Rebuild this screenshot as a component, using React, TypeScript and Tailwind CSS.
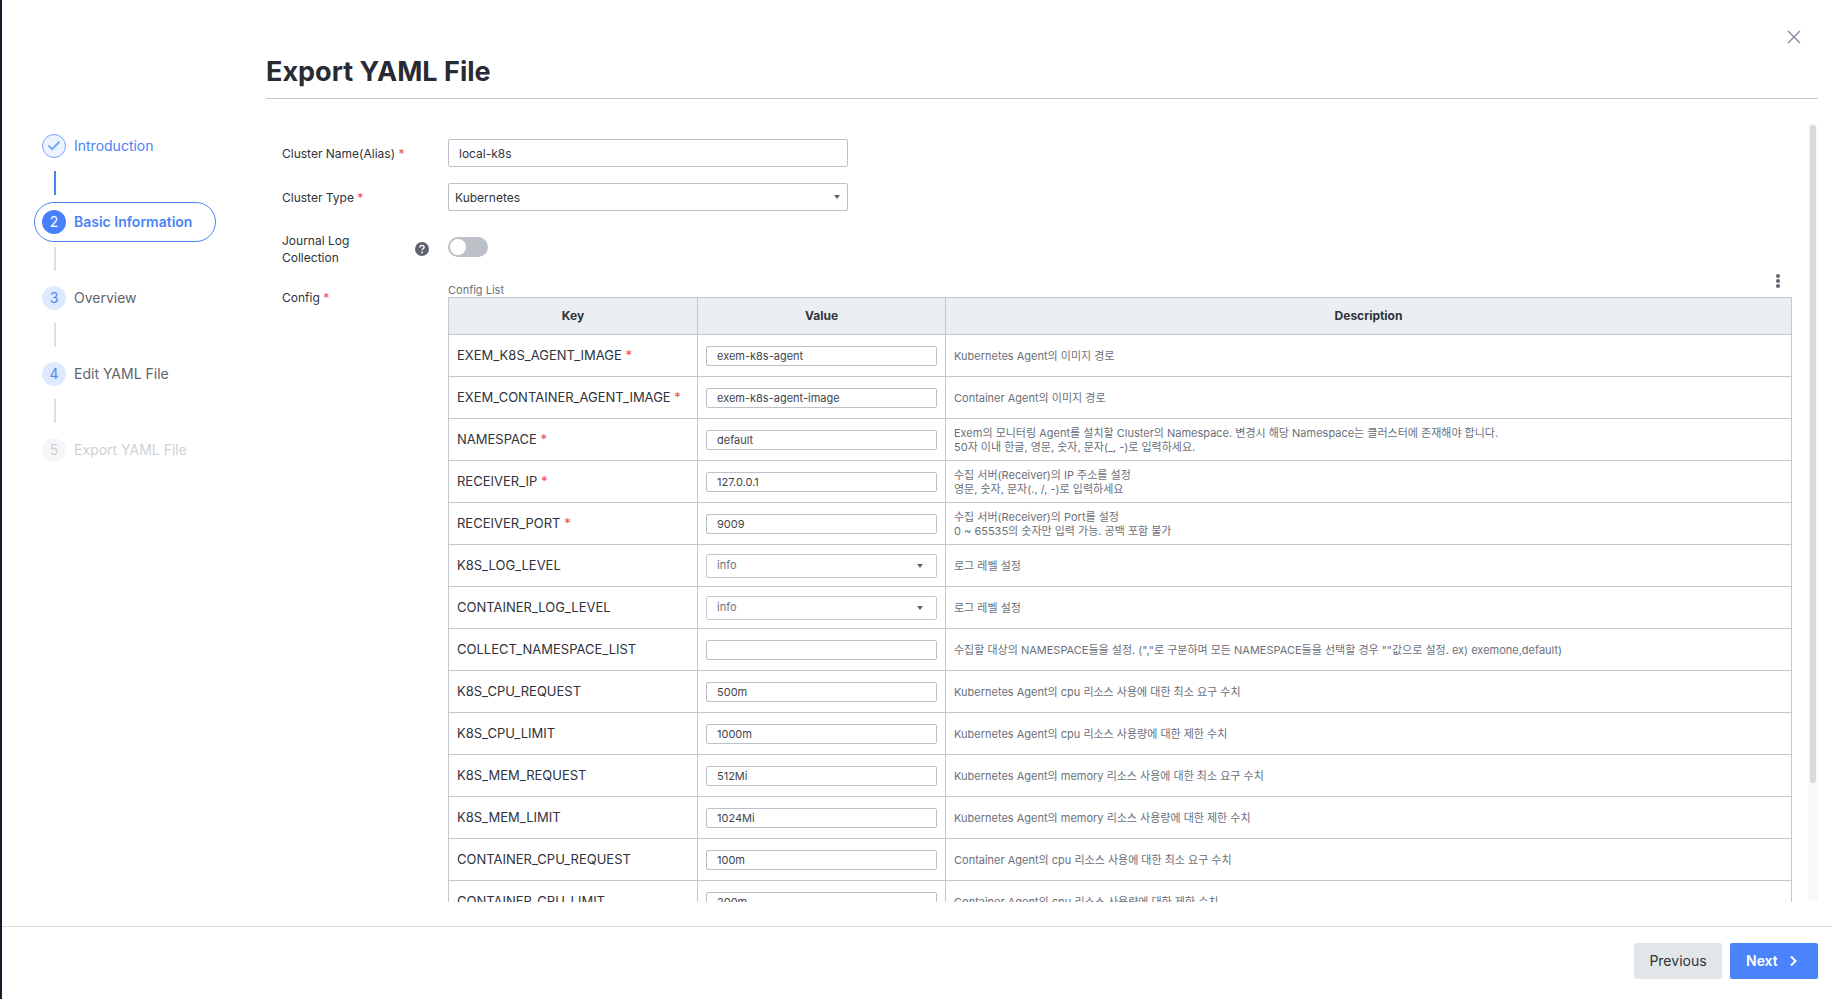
import { useState, type UIEvent } from "react"
import { clsx } from "clsx"

type StepState = "done" | "current" | "todo" | "disabled"

interface Step {
  label: string
  state: StepState
}

interface ConfigItem {
  key: string
  value: string
  description: string
  required?: boolean
  options?: string[]
}

const steps: Step[] = [
  { label: "Introduction", state: "done" },
  { label: "Basic Information", state: "current" },
  { label: "Overview", state: "todo" },
  { label: "Edit YAML File", state: "todo" },
  { label: "Export YAML File", state: "disabled" },
]

const logLevels = ["debug", "info", "warn", "error"]

const configItems: ConfigItem[] = [
  { key: "EXEM_K8S_AGENT_IMAGE", value: "exem-k8s-agent", description: "Kubernetes Agent의 이미지 경로", required: true },
  {
    key: "EXEM_CONTAINER_AGENT_IMAGE",
    value: "exem-k8s-agent-image",
    description: "Container Agent의 이미지 경로",
    required: true,
  },
  {
    key: "NAMESPACE",
    value: "default",
    description:
      "Exem의 모니터링 Agent를 설치할 Cluster의 Namespace. 변경시 해당 Namespace는 클러스터에 존재해야 합니다.\n50자 이내 한글, 영문, 숫자, 문자(_, -)로 입력하세요.",
    required: true,
  },
  {
    key: "RECEIVER_IP",
    value: "127.0.0.1",
    description: "수집 서버(Receiver)의 IP 주소를 설정\n영문, 숫자, 문자(., /, -)로 입력하세요",
    required: true,
  },
  {
    key: "RECEIVER_PORT",
    value: "9009",
    description: "수집 서버(Receiver)의 Port를 설정\n0 ~ 65535의 숫자만 입력 가능. 공백 포함 불가",
    required: true,
  },
  { key: "K8S_LOG_LEVEL", value: "info", description: "로그 레벨 설정", options: logLevels },
  { key: "CONTAINER_LOG_LEVEL", value: "info", description: "로그 레벨 설정", options: logLevels },
  {
    key: "COLLECT_NAMESPACE_LIST",
    value: "",
    description:
      '수집할 대상의 NAMESPACE들을 설정. (","로 구분하며 모든 NAMESPACE들을 선택할 경우 ""값으로 설정. ex) exemone,default)',
  },
  { key: "K8S_CPU_REQUEST", value: "500m", description: "Kubernetes Agent의 cpu 리소스 사용에 대한 최소 요구 수치" },
  { key: "K8S_CPU_LIMIT", value: "1000m", description: "Kubernetes Agent의 cpu 리소스 사용량에 대한 제한 수치" },
  { key: "K8S_MEM_REQUEST", value: "512Mi", description: "Kubernetes Agent의 memory 리소스 사용에 대한 최소 요구 수치" },
  { key: "K8S_MEM_LIMIT", value: "1024Mi", description: "Kubernetes Agent의 memory 리소스 사용량에 대한 제한 수치" },
  { key: "CONTAINER_CPU_REQUEST", value: "100m", description: "Container Agent의 cpu 리소스 사용에 대한 최소 요구 수치" },
  { key: "CONTAINER_CPU_LIMIT", value: "200m", description: "Container Agent의 cpu 리소스 사용량에 대한 제한 수치" },
  { key: "CONTAINER_MEM_REQUEST", value: "128Mi", description: "Container Agent의 memory 리소스 사용에 대한 최소 요구 수치" },
  { key: "CONTAINER_MEM_LIMIT", value: "256Mi", description: "Container Agent의 memory 리소스 사용량에 대한 제한 수치" },
]

function Required() {
  return <span className="text-[#f04a4a]"> *</span>
}

function Caret({ className }: { className?: string }) {
  return (
    <svg viewBox="0 0 6 4" className={clsx("pointer-events-none absolute h-1 w-1.5 text-[#5f636e]", className)}>
      <path d="M0 0h6L3 4z" fill="currentColor" />
    </svg>
  )
}

function StepItem({ step, index }: { step: Step; index: number }) {
  const { label, state } = step
  return (
    <button
      type="button"
      disabled={state === "disabled"}
      className={clsx(
        "flex h-10 w-[182px] items-center gap-2 rounded-full border pl-[7px] text-left text-sm",
        state === "current" ? "border-[#4b83f5]" : "border-transparent",
      )}
    >
      <span
        className={clsx(
          "flex size-6 shrink-0 items-center justify-center rounded-full",
          state === "done" && "border border-[#78a5f8] bg-[#edf3fe] text-[#78a5f8]",
          state === "current" && "bg-[#4880fa] text-white",
          state === "todo" && "bg-[#dde9fe] text-[#5585f5]",
          state === "disabled" && "bg-[#f5f6f7] text-[#cfd1d6]",
        )}
      >
        {state === "done" ? (
          <svg viewBox="0 0 14 12" className="h-3 w-3.5" fill="none" stroke="currentColor" strokeWidth="2">
            <path d="M1.5 5.5 5.2 9.2 12.5 1.8" />
          </svg>
        ) : (
          index + 1
        )}
      </span>
      <span
        className={clsx(
          state === "done" && "text-[#4b83f5]",
          state === "current" && "font-semibold text-[#4b83f5]",
          state === "todo" && "text-[#5f636e]",
          state === "disabled" && "text-[#cfd1d6]",
        )}
      >
        {label}
      </span>
    </button>
  )
}

function Stepper() {
  return (
    <nav className="w-[264px] shrink-0 pt-[126px] pl-8">
      <ol>
        {steps.map((step, index) => (
          <li key={step.label}>
            <StepItem step={step} index={index} />
            {index < steps.length - 1 && (
              <div className="h-9 pt-[5px] pl-5">
                <div className={clsx("h-6 w-0.5", step.state === "done" ? "bg-[#4b83f5]" : "bg-[#dcdfe3]")} />
              </div>
            )}
          </li>
        ))}
      </ol>
    </nav>
  )
}

function ConfigTable() {
  return (
    <table className="w-full table-fixed border-collapse text-[#2f333c]">
      <colgroup>
        <col className="w-[249px]" />
        <col className="w-[248px]" />
        <col />
      </colgroup>
      <thead>
        <tr className="h-[37px] bg-[#ebeff2] text-xs font-semibold">
          <th className="border border-[#c4c7cd]">Key</th>
          <th className="border border-[#c4c7cd]">Value</th>
          <th className="border border-[#c4c7cd]">Description</th>
        </tr>
      </thead>
      <tbody>
        {configItems.map((item) => (
          <tr key={item.key} className="h-[42px]">
            <td className="border border-[#c4c7cd] px-2 text-[13px] whitespace-nowrap">
              <label htmlFor={item.key}>
                {item.key}
                {item.required && <Required />}
              </label>
            </td>
            <td className="border border-[#c4c7cd] px-2">
              {item.options ? (
                <div className="relative">
                  <select
                    id={item.key}
                    defaultValue={item.value}
                    className="block h-6 w-full appearance-none rounded-xs border border-[#c4c7cd] bg-white px-2.5 text-[11px] text-[#6f737d]"
                  >
                    {item.options.map((option) => (
                      <option key={option}>{option}</option>
                    ))}
                  </select>
                  <Caret className="top-2.5 right-3.5" />
                </div>
              ) : (
                <input
                  id={item.key}
                  defaultValue={item.value}
                  className="block h-5 w-full rounded-xs border border-[#bcc0c7] px-2.5 text-[11px] text-[#41454e]"
                />
              )}
            </td>
            <td className="border border-[#c4c7cd] px-2 text-[11px] leading-[14px] whitespace-pre-line text-[#6c707a]">
              {item.description}
            </td>
          </tr>
        ))}
      </tbody>
    </table>
  )
}

export default function App() {
  const [scrolled, setScrolled] = useState(0)

  const handleScroll = (e: UIEvent<HTMLDivElement>) => {
    const el = e.currentTarget
    setScrolled((el.scrollTop / el.scrollHeight) * 100)
  }

  return (
    <div className="flex h-screen flex-col border-l-2 border-[#161a29] bg-white font-['Inter','Noto_Sans_CJK_KR',sans-serif] text-[#2f333c]">
      <div className="flex min-h-0 flex-1">
        <Stepper />

        <main className="flex min-w-0 flex-1 flex-col pr-3.5 pb-6">
          <div className="flex h-[54px] shrink-0 items-end justify-end pr-3 pb-[5px]">
            <button type="button" aria-label="Close" className="size-6 text-[#85899a]">
              <svg viewBox="0 0 24 24" fill="none" stroke="currentColor" strokeWidth="1.4">
                <path d="M6 6l12 12M18 6 6 18" />
              </svg>
            </button>
          </div>
          <h1 className="border-b border-[#c4c7cd] pb-2 text-[27px] leading-9 font-bold text-[#282b33]">
            Export YAML File
          </h1>

          <div className="mt-6 flex min-h-0 flex-1">
            <div
              onScroll={handleScroll}
              className="min-w-0 flex-1 overflow-y-auto p-4 text-xs leading-[17px] [scrollbar-width:none]"
            >
              <div className="flex h-7 items-center">
                <label htmlFor="cluster-name" className="w-[166px]">
                  Cluster Name(Alias)
                  <Required />
                </label>
                <input
                  id="cluster-name"
                  defaultValue="local-k8s"
                  className="h-7 w-[400px] rounded-xs border border-[#bcc0c7] px-2.5"
                />
              </div>

              <div className="mt-4 flex h-7 items-center">
                <label htmlFor="cluster-type" className="w-[166px]">
                  Cluster Type
                  <Required />
                </label>
                <div className="relative">
                  <select
                    id="cluster-type"
                    defaultValue="Kubernetes"
                    className="block h-7 w-[400px] appearance-none rounded-xs border border-[#bcc0c7] bg-white px-1.5"
                  >
                    <option>Kubernetes</option>
                    <option>OpenShift</option>
                  </select>
                  <Caret className="top-3 right-2" />
                </div>
              </div>

              <div className="mt-5 flex h-9 items-center">
                <div className="flex w-[166px] items-center justify-between pr-[19px]">
                  <label htmlFor="journal-log" className="w-20">
                    Journal Log Collection
                  </label>
                  <svg viewBox="0 0 14 14" className="size-3.5">
                    <circle cx="7" cy="7" r="7" fill="#5f636e" />
                    <path
                      d="M4.9 5.4c0-1.2.9-2 2.1-2s2.1.7 2.1 1.8c0 1.5-2 1.5-2 3.1"
                      fill="none"
                      stroke="#fff"
                      strokeWidth="1.4"
                    />
                    <circle cx="7.1" cy="10.4" r=".9" fill="#fff" />
                  </svg>
                </div>
                <input
                  id="journal-log"
                  type="checkbox"
                  role="switch"
                  className="mb-1 flex h-5 w-10 appearance-none items-center rounded-full bg-[#bcc0c7] px-0.5 before:size-4 before:rounded-full before:bg-white checked:justify-end checked:bg-[#4b83f5]"
                />
              </div>

              <div className="mt-1.5 flex">
                <div className="w-[166px] shrink-0 pt-4">
                  Config
                  <Required />
                </div>
                <section className="min-w-0 flex-1">
                  <div className="flex h-6 items-end justify-between text-[#6f737d]">
                    <span className="text-[11px] leading-[14px]">Config List</span>
                    <button type="button" aria-label="More" className="mr-1.5 h-6 w-4 text-[#5f636e]">
                      <svg viewBox="0 0 16 24" fill="currentColor">
                        <circle cx="8" cy="3" r="2" />
                        <circle cx="8" cy="8" r="2" />
                        <circle cx="8" cy="13" r="2" />
                      </svg>
                    </button>
                  </div>
                  <ConfigTable />
                </section>
              </div>
            </div>

            <div className="relative w-2.5 shrink-0 rounded-full bg-[#f7f8fa]">
              <div
                className="absolute inset-x-0.5 mt-0.5 h-[84.5%] rounded-full bg-[#d6d9dc]"
                style={{ top: `${scrolled}%` }}
              />
            </div>
          </div>
        </main>
      </div>

      <footer className="flex shrink-0 justify-end gap-2 border-t border-[#d6d8db] pt-4 pr-3.5 pb-5 text-sm">
        <button type="button" className="h-9 w-[88px] rounded-xs bg-[#e2e6e9]">
          Previous
        </button>
        <button
          type="button"
          className="flex h-9 w-[88px] items-center gap-2 rounded-xs bg-[#4b83fa] pl-4 font-semibold text-white"
        >
          Next
          <svg viewBox="0 0 14 14" className="size-3.5" fill="none" stroke="currentColor" strokeWidth="2">
            <path d="m5 2.5 4.5 4.5L5 11.5" />
          </svg>
        </button>
      </footer>
    </div>
  )
}
